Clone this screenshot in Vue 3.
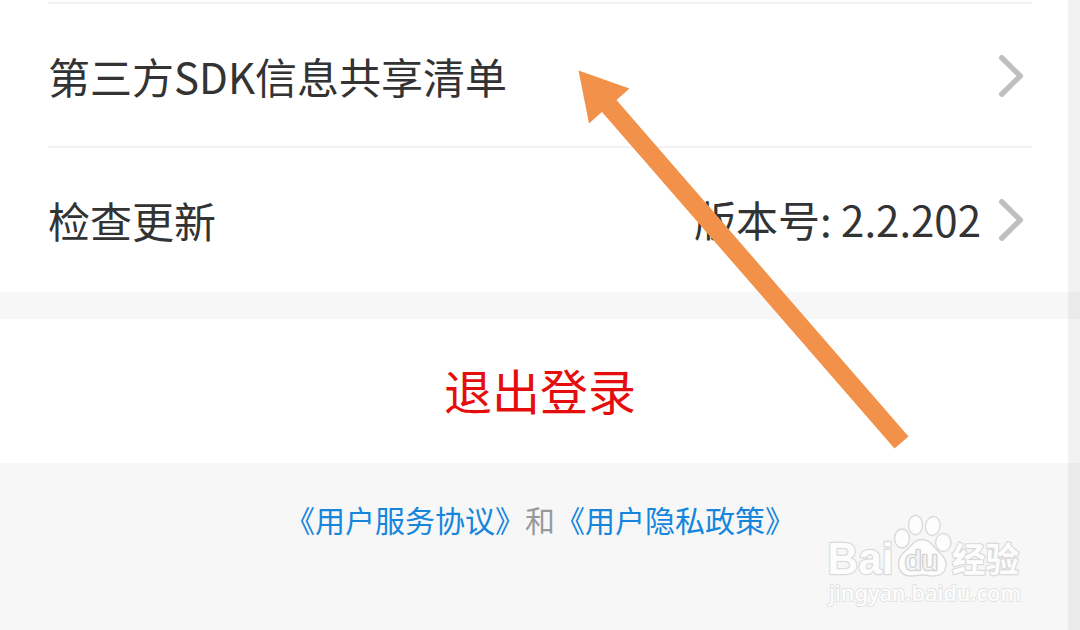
<script setup>
import { ref } from 'vue';

const version = ref('2.2.202');

const rows = ref([
    { title: '第三方SDK信息共享清单', value: '' },
    { title: '检查更新', value: '版本号: ' + version.value },
]);
</script>

<template>
    <div class="page">
        <ul class="setting-list">
            <li v-for="row in rows" :key="row.title" class="setting-row">
                <span class="setting-ttl">{{ row.title }}</span>
                <span class="setting-value">{{ row.value }}</span>
                <svg class="setting-arrow" width="25" height="42" viewBox="0 0 25 42">
                    <path d="M2.7 2.8 21.3 21 2.7 39.2" />
                </svg>
            </li>
        </ul>
        <button class="logout-btn">退出登录</button>
        <p class="agreement">
            <a>《用户服务协议》</a><span>和</span><a>《用户隐私政策》</a>
        </p>

        <div class="side-bar"></div>

        <!-- 指示箭头 -->
        <svg class="pointer" width="1080" height="630" viewBox="0 0 1080 630">
            <path d="M578.5 70.5 629.5 88.5 616.5 100 908.5 436.5 894.5 448.5 602 112 589 123.5Z" />
        </svg>

        <!-- 水印 -->
        <svg class="watermark" width="210" height="110" viewBox="820 510 210 110">
            <g class="mark">
                <text class="mark-en" x="827.5" y="574" textLength="66" lengthAdjust="spacingAndGlyphs">Bai</text>
                <ellipse cx="902" cy="538.5" rx="7.5" ry="9.5" />
                <ellipse cx="915.5" cy="525" rx="7" ry="9.7" />
                <ellipse cx="932.7" cy="526" rx="7.3" ry="9.5" transform="rotate(10 932.7 526)" />
                <ellipse cx="943.3" cy="542.5" rx="7.7" ry="9" />
                <path d="M922 539.5c-8 0-11 7-16 11-5 4-8 8-7.5 14 .5 7 5 11.5 12 11.5 5 0 7-1 11.5-1s7 1 12 1c8 0 12-5 12-12 0-6-4-9-8-13-5-5-8-11.5-16-11.5Z" />
                <text class="mark-du" x="905" y="570" textLength="33" lengthAdjust="spacingAndGlyphs">du</text>
                <text class="mark-cn" x="952" y="571.5" textLength="67" lengthAdjust="spacingAndGlyphs">经验</text>
                <text class="mark-url" x="829" y="600.5" textLength="192" lengthAdjust="spacingAndGlyphs">jingyan.baidu.com</text>
            </g>
        </svg>
    </div>
</template>

<style>
body {
    margin: 0;
    overflow: hidden;
}
</style>

<style scoped>
.page {
    position: relative;
    height: 630px;
    overflow: hidden;
    background: #f7f7f7;
    color: #333;
    font-family: "Noto Sans CJK SC", sans-serif;
}

.setting-list {
    height: 290px;
    margin: 0;
    padding: 2px 48px 0;
    background: #fff;
    list-style: none;
}
.setting-row {
    display: flex;
    align-items: center;
    box-sizing: border-box;
    height: 144px;
    padding-right: 8px;
    border-top: 2px solid #f2f2f2;
    font-size: 42px;
    line-height: 60px;
}
.setting-ttl {
    flex: 1;
    padding-top: 2px;
}
.setting-value {
    margin-right: 18px;
    white-space: pre;
}
.setting-arrow {
    margin-top: 2px;
    fill: none;
    stroke: #bfbfbf;
    stroke-width: 5.4;
    stroke-linecap: round;
    stroke-linejoin: round;
}

.logout-btn {
    display: block;
    box-sizing: border-box;
    width: 100%;
    height: 144px;
    margin-top: 27px;
    padding: 0 0 4px;
    border: none;
    background: #fff;
    color: #e60d0d;
    font-family: inherit;
    font-size: 48px;
    line-height: 140px;
}

.agreement {
    margin: 34px 0 0;
    color: #999;
    font-size: 30px;
    line-height: 44px;
    text-align: center;
    a {
        color: #1586dc;
    }
}

.side-bar {
    position: absolute;
    top: 0;
    right: 0;
    width: 12px;
    height: 100%;
    background: rgba(0, 0, 0, .05);
}
.pointer {
    position: absolute;
    top: 0;
    left: 0;
    fill: #f2924a;
}
.watermark {
    position: absolute;
    top: 510px;
    left: 820px;
}
.mark {
    fill: #fdfdfd;
    stroke: #dadada;
    stroke-width: 1.4;
    stroke-linejoin: round;
}
.mark text {
    paint-order: stroke;
    stroke-width: 2.4;
}
.mark-en {
    font: 700 45px "Liberation Sans", sans-serif;
}
.mark .mark-du {
    font: 400 27px "Liberation Sans", sans-serif;
    fill: #f4f4f4;
    stroke: #d2d2d2;
    stroke-width: 2.6;
}
.mark-cn {
    font: 700 34px "Noto Sans CJK SC", sans-serif;
}
.mark .mark-url {
    font: 500 22px "Noto Sans", sans-serif;
    stroke: #e2e2e2;
    stroke-width: 1.8;
}
</style>
